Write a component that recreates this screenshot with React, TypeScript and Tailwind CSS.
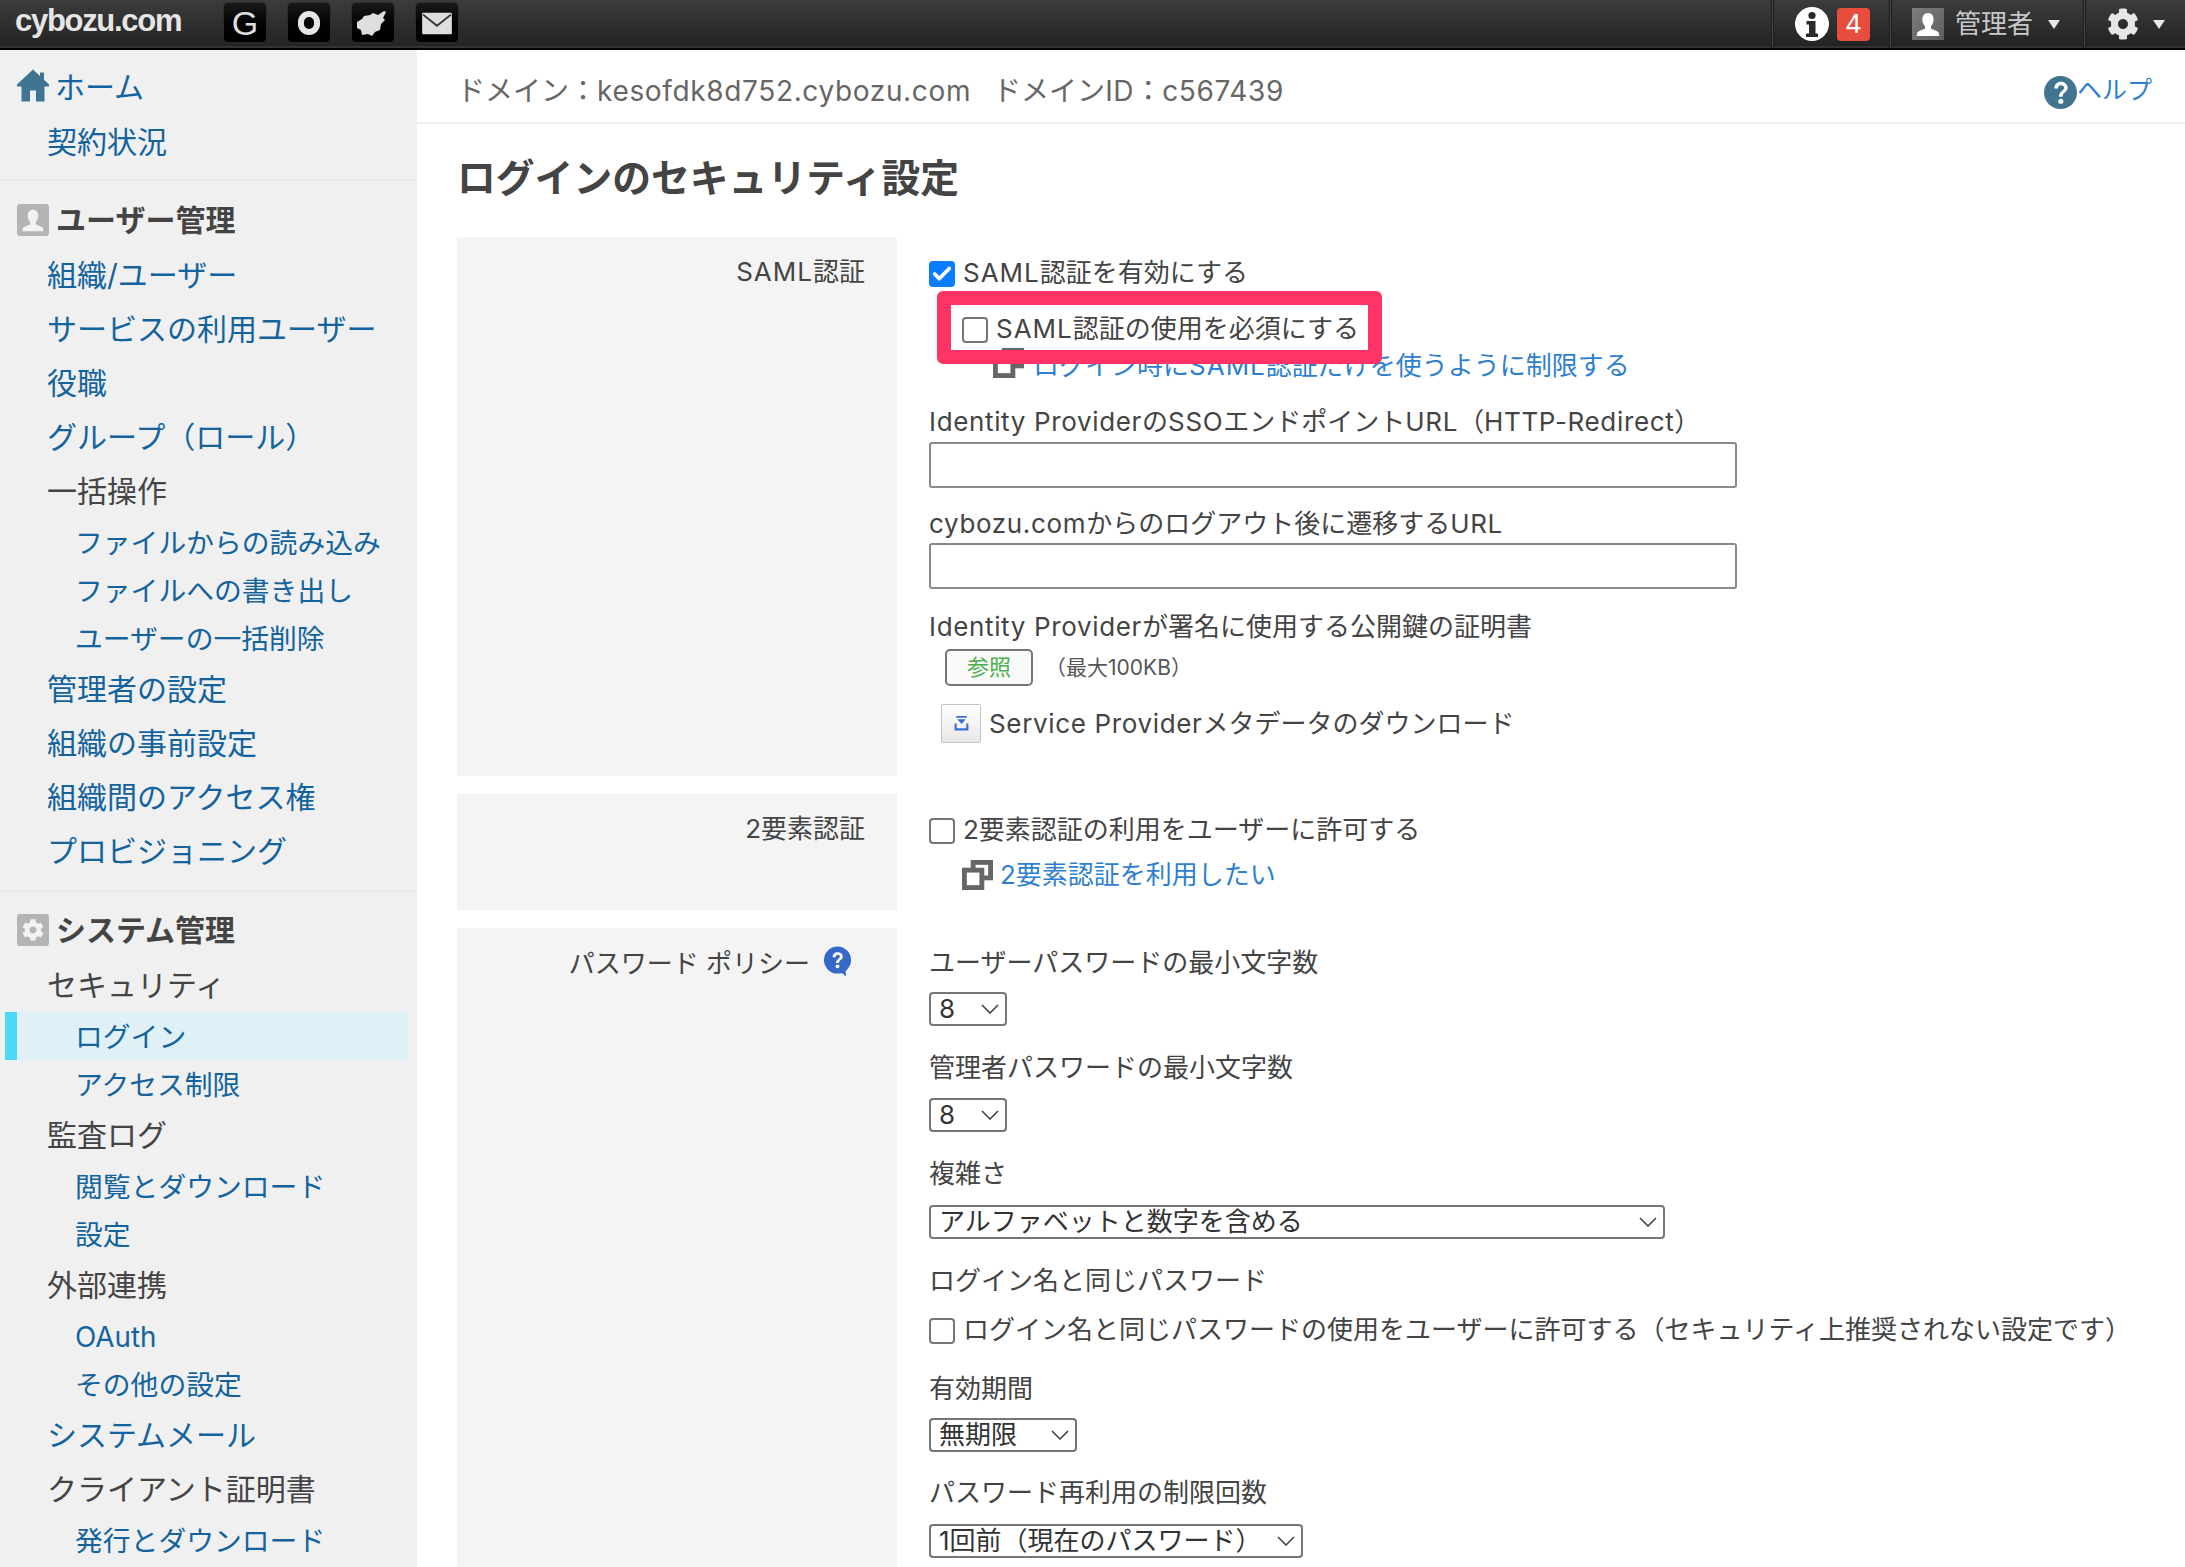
import { Check } from 'lucide-react';
import { FaCog } from 'react-icons/fa';
import type { ReactNode } from 'react';

function UserGlyph({ className }: { className?: string }) {
  return (
    <svg viewBox="0 0 32 32" className={className}>
      <path
        d="M16 5c-3.6 0-5.6 2.8-5.6 6.4 0 2.6 1 5 2.6 6.6v2.4c-1.6 1.2-6.4 2.2-7.6 4.2-.5.8-.6 2.4-.6 3.4h22.4c0-1-.1-2.6-.6-3.4-1.2-2-6-3-7.6-4.2V18c1.6-1.6 2.6-4 2.6-6.6C21.6 7.8 19.6 5 16 5z"
        fill="currentColor"
      />
    </svg>
  );
}

// latin runs sit a little wider in the original font
function L({ children }: { children: ReactNode }) {
  return <span className="tracking-[0.65px]">{children}</span>;
}

function Saml() {
  return <span className="tracking-[1px]">SAML</span>;
}

function TopIcon({ children }: { children: ReactNode }) {
  return (
    <div className="flex h-[41px] w-[44px] items-center justify-center rounded-[5px] border border-[#2c2c2c] bg-gradient-to-b from-[#1a1a1a] to-black text-[#dedede]">
      {children}
    </div>
  );
}

function Sep() {
  return <div className="h-[48px] w-[3px] border-x border-[#1c1c1c] bg-[#4a4a4a]" />;
}

function Caret() {
  return <div className="h-0 w-0 border-x-[6px] border-t-[9px] border-x-transparent border-t-[#e8e8e8]" />;
}

function TopBar() {
  return (
    <header className="flex h-[50px] items-start border-b-2 border-black bg-gradient-to-b from-[#3c3c3c] to-[#222222] shadow-[inset_0_-2px_0_#333333]">
      <div className="ml-[15px] w-[208px] pt-[2px] text-[31px] leading-[38px] font-bold tracking-[-1.3px] text-[#e6e6e6] [font-family:'Liberation_Sans',sans-serif]">
        cybozu.com
      </div>
      <div className="mt-[2px] flex gap-[20px]">
        <TopIcon>
          <span className="text-[34px] leading-none [font-family:'Liberation_Sans',sans-serif]">G</span>
        </TopIcon>
        <TopIcon>
          <div className="h-[24px] w-[22px] rounded-full border-[6px] border-[#e6e6e6]" />
        </TopIcon>
        <TopIcon>
          <svg viewBox="0 0 34 28" className="h-[28px] w-[34px]">
            <path
              d="M1 13l5-3 2-3 6-1 3-2 5 2 6-4 2 1-3 6 2 2-4 4-1 6-5 2-3 4-4-2-6 1-1-5-4-2z"
              fill="#dedede"
            />
          </svg>
        </TopIcon>
        <TopIcon>
          <svg viewBox="0 0 34 28" className="h-[26px] w-[34px]">
            <rect x="1" y="3" width="32" height="23" rx="1" fill="#dedede" />
            <path d="M2 5l15 12L32 5" fill="none" stroke="#333333" strokeWidth="2" />
          </svg>
        </TopIcon>
      </div>
      <div className="ml-auto flex h-[48px] items-center">
        <Sep />
        <div className="flex w-[115px] items-center gap-[8px] pl-[21px]">
          <svg viewBox="0 0 34 34" className="h-[34px] w-[34px]">
            <circle cx="17" cy="17" r="17" fill="#ffffff" />
            <circle cx="17" cy="8.5" r="3.6" fill="#2a2a2a" />
            <path d="M11.5 14h9v12.5h2.5V30H11v-3.5h3V17.5h-2.500z" fill="#2a2a2a" />
          </svg>
          <div className="flex h-[33px] w-[33px] items-center justify-center rounded-[4px] bg-[#e84c3d] text-[26px] leading-none text-white">
            4
          </div>
        </div>
        <Sep />
        <div className="flex w-[191px] items-center pl-[20px]">
          <div className="h-[32px] w-[32px] overflow-hidden bg-gradient-to-br from-[#7d7d7d] to-[#5e5e5e] text-white">
            <UserGlyph className="h-[32px] w-[32px]" />
          </div>
          <span className="ml-[11px] text-[26px] leading-none text-[#c9c9c9]">管理者</span>
          <div className="ml-[15px]">
            <Caret />
          </div>
        </div>
        <Sep />
        <div className="flex items-center pr-[20px] pl-[21px] text-[#e6e6e6]">
          <FaCog className="h-[32px] w-[32px]" />
          <div className="ml-[14px]">
            <Caret />
          </div>
        </div>
      </div>
    </header>
  );
}

function Nav1({ children, dark }: { children: ReactNode; dark?: boolean }) {
  return (
    <div className={`flex h-[54px] items-center pl-[47px] text-[30px] ${dark ? 'text-[#444444]' : 'text-[#13639f]'}`}>
      {children}
    </div>
  );
}

function Nav2({ children, active }: { children: ReactNode; active?: boolean }) {
  if (active) {
    return (
      <div className="ml-[5px] flex h-[48px] w-[402px] items-center border-l-[12px] border-[#4bd9f7] bg-[#dff1f6] pt-[4px] pl-[58px] text-[27.8px] text-[#13639f]">
        {children}
      </div>
    );
  }
  return <div className="flex h-[48px] items-center pt-[4px] pl-[75px] text-[27.8px] text-[#13639f]">{children}</div>;
}

function NavHead({ icon, children }: { icon: ReactNode; children: ReactNode }) {
  return (
    <div className="flex h-[56px] items-center gap-[7px] pl-[17px] text-[30px] font-bold text-[#444444]">
      <div className="flex h-[32px] w-[32px] items-center justify-center overflow-hidden rounded-[3px] bg-[#b4b4b4] text-[#f2f2f2]">
        {icon}
      </div>
      {children}
    </div>
  );
}

function Sidebar() {
  return (
    <aside className="h-full w-[417px] shrink-0 bg-[#f0f0f0]">
      <div className="border-b-2 border-[#ebebeb] pt-[9px] pb-[10px]">
        <div className="flex h-[56px] items-center gap-[6px] pl-[17px] text-[30px] text-[#13639f]">
          <svg viewBox="0 0 32 32" className="-mt-[3px] h-[33px] w-[32px]">
            <path
              d="M16 0l7 6.500V3h4v7.200L32 15v2h-4.500v15H19V21h-6v11H4.500V17H0v-2z"
              fill="#3f7591"
            />
          </svg>
          ホーム
        </div>
        <Nav1>契約状況</Nav1>
      </div>
      <div className="border-b-2 border-[#ebebeb] pt-[11px] pb-[12px]">
        <NavHead icon={<UserGlyph className="h-[30px] w-[30px]" />}>ユーザー管理</NavHead>
        <Nav1>組織/ユーザー</Nav1>
        <Nav1>サービスの利用ユーザー</Nav1>
        <Nav1>役職</Nav1>
        <Nav1>グループ（ロール）</Nav1>
        <Nav1 dark>一括操作</Nav1>
        <Nav2>ファイルからの読み込み</Nav2>
        <Nav2>ファイルへの書き出し</Nav2>
        <Nav2>ユーザーの一括削除</Nav2>
        <Nav1>管理者の設定</Nav1>
        <Nav1>組織の事前設定</Nav1>
        <Nav1>組織間のアクセス権</Nav1>
        <Nav1>プロビジョニング</Nav1>
      </div>
      <div className="pt-[10px]">
        <NavHead icon={<FaCog className="h-[22px] w-[22px]" />}>システム管理</NavHead>
        <Nav1 dark>セキュリティ</Nav1>
        <Nav2 active>ログイン</Nav2>
        <Nav2>アクセス制限</Nav2>
        <Nav1 dark>監査ログ</Nav1>
        <Nav2>閲覧とダウンロード</Nav2>
        <Nav2>設定</Nav2>
        <Nav1 dark>外部連携</Nav1>
        <Nav2>OAuth</Nav2>
        <Nav2>その他の設定</Nav2>
        <Nav1>システムメール</Nav1>
        <Nav1 dark>クライアント証明書</Nav1>
        <Nav2>発行とダウンロード</Nav2>
      </div>
    </aside>
  );
}

function Box({ checked }: { checked?: boolean }) {
  if (checked) {
    return (
      <div className="mt-[3px] flex h-[26px] w-[26px] shrink-0 items-center justify-center rounded-[4px] bg-[#0a7cff] text-white">
        <Check className="h-[22px] w-[22px]" strokeWidth={4} />
      </div>
    );
  }
  return <div className="mt-[3px] h-[26px] w-[26px] shrink-0 rounded-[4px] border-2 border-[#767676] bg-white" />;
}

function CheckRow({ checked, className, children }: { checked?: boolean; className?: string; children: ReactNode }) {
  return (
    <div className={`flex h-[36px] items-center gap-[8px] ${className ?? ''}`}>
      <Box checked={checked} />
      <span>{children}</span>
    </div>
  );
}

function Label({ className, children }: { className?: string; children: ReactNode }) {
  return (
    <div className={`flex h-[36px] items-center ${className ?? ''}`}>
      <span>{children}</span>
    </div>
  );
}

function TextBox({ className }: { className?: string }) {
  return <div className={`h-[46px] w-[808px] rounded-[3px] border-2 border-[#8a8a8a] bg-white ${className ?? ''}`} />;
}

function SelectBox({ width, className, children }: { width: string; className?: string; children: ReactNode }) {
  return (
    <div
      className={`flex h-[34px] items-center justify-between rounded-[4px] border-2 border-[#767676] bg-white pr-[6px] pl-[8px] text-[26px] leading-none text-[#333333] ${width} ${className ?? ''}`}
    >
      <span>{children}</span>
      <svg viewBox="0 0 18 10" className="h-[10px] w-[18px]">
        <path d="M1 1l8 8 8-8" fill="none" stroke="#444444" strokeWidth="1.600" />
      </svg>
    </div>
  );
}

function WindowIcon({ className }: { className?: string }) {
  return (
    <svg viewBox="0 0 32 32" className={`h-[31px] w-[31px] shrink-0 ${className ?? ''}`}>
      <rect x="9" y="1" width="23" height="21" fill="#666666" />
      <rect x="14" y="6" width="13" height="11" fill="#ffffff" />
      <rect x="0" y="9" width="23" height="23" fill="#666666" />
      <rect x="5" y="14" width="13" height="13" fill="#ffffff" />
    </svg>
  );
}

function Section({ label, icon, className, children }: { label?: ReactNode; icon?: ReactNode; className?: string; children: ReactNode }) {
  return (
    <div className={`grid grid-cols-[440px_1fr] gap-x-[32px] ${className ?? ''}`}>
      <div className="bg-[#f4f4f4]">{icon ?? <div className="pt-[17px] pr-[32px] text-right leading-[36px]">{label}</div>}</div>
      <div>{children}</div>
    </div>
  );
}

function Content() {
  return (
    <main className="min-w-0 flex-1 bg-white">
      <div className="flex h-[74px] justify-between border-b-2 border-[#f0f0f0] pr-[33px] pl-[40px] text-[#666666]">
        <div className="mt-[23px] flex gap-[22px] text-[28px] leading-[36px]">
          <span>ドメイン：<L>kesofdk8d752.cybozu.com</L></span>
          <span>ドメイン<L>ID</L>：<L>c567439</L></span>
        </div>
        <div className="flex items-start text-[25px] text-[#2f7fd0]">
          <svg viewBox="0 0 32 32" className="mt-[26px] h-[33px] w-[33px]">
            <circle cx="16" cy="16" r="16" fill="#40748f" />
            <path d="M10 12c0-4 3-6.500 6.500-6.500S23 8 23 11.500c0 4-5 4.500-5 8.500h-3.500c0-5 5-5.500 5-8.500 0-1.500-1.300-2.500-3-2.500s-3 1.200-3 3z" fill="#ffffff" />
            <circle cx="16.300" cy="24.500" r="2.500" fill="#ffffff" />
          </svg>
          <span className="mt-[22px] leading-[36px]">ヘルプ</span>
        </div>
      </div>

      <div className="pl-[40px] text-[26px] text-[#444444]">
        <h1 className="flex h-[113px] items-center pb-[4px] text-[38.8px] font-bold text-[#444444]">ログインのセキュリティ設定</h1>

        <Section label={<><Saml />認証</>} className="h-[539px]">
          <CheckRow checked className="mt-[17px]"><Saml />認証を有効にする</CheckRow>
          <div className="relative mt-[20px] ml-[33px]">
            <CheckRow><Saml />認証の使用を必須にする</CheckRow>
          </div>
          <div className="mt-[1px] flex h-[36px] items-center gap-[9px] pl-[64px] text-[#2f7fd0]">
            <WindowIcon className="-mt-[6px]" />
            <span>ログイン時に<Saml />認証だけを使うように制限する</span>
          </div>
          <Label className="mt-[20px]"><L>Identity Provider</L>の<L>SSO</L>エンドポイント<L>URL</L>（<L>HTTP-Redirect</L>）</Label>
          <TextBox className="mt-[3px]" />
          <Label className="mt-[17px]"><L>cybozu.com</L>からのログアウト後に遷移する<L>URL</L></Label>
          <TextBox className="mt-[2px]" />
          <Label className="mt-[19px]"><L>Identity Provider</L>が署名に使用する公開鍵の証明書</Label>
          <div className="mt-[5px] flex h-[37px] items-center pl-[16px]">
            <div className="flex h-[37px] w-[88px] items-center justify-center rounded-[5px] border-2 border-[#767676] bg-[#fafafa] text-[22px] text-[#4caf50]">
              参照
            </div>
            <span className="ml-[12px] text-[21px] text-[#555555]">（最大100KB）</span>
          </div>
          <div className="mt-[18px] flex h-[39px] items-center gap-[8px] pl-[12px]">
            <div className="flex h-[39px] w-[40px] items-center justify-center rounded-[2px] border border-[#c4c4c4] bg-gradient-to-b from-white to-[#e8e8e8]">
              <svg viewBox="0 0 16 16" className="h-[17px] w-[17px]">
                <path d="M3 1h10v1.500H3zM4 4h8l-4 4.500z" fill="#3a6fd0" />
                <path d="M1.500 8v6.500h13V8h-2v4.500h-9V8z" fill="#3a6fd0" />
              </svg>
            </div>
            <span><L>Service Provider</L>メタデータのダウンロード</span>
          </div>
        </Section>

        <Section label="2要素認証" className="mt-[18px] h-[116px]">
          <CheckRow className="mt-[17px]">2要素認証の利用をユーザーに許可する</CheckRow>
          <div className="mt-[9px] flex h-[36px] items-center gap-[7px] pl-[33px] text-[#2f7fd0]">
            <WindowIcon />
            <span>2要素認証を利用したい</span>
          </div>
        </Section>

        <Section
          className="mt-[18px] h-[700px]"
          icon={
            <div className="flex items-start justify-end gap-[13px] pt-[18px] pr-[45px]">
              <span className="leading-[36px]">パスワード ポリシー</span>
              <svg viewBox="0 0 30 32" className="h-[32px] w-[29px]">
                <circle cx="15" cy="14" r="14" fill="#3568c8" />
                <path d="M18 26l6 5-1-8z" fill="#3568c8" />
                <path d="M10 11c0-3 2.300-5 5.300-5s5.200 1.700 5.200 4.300c0 3.200-4 3.700-4 6.700h-3c0-4 4-4.300 4-6.700 0-1-.9-1.800-2.200-1.800s-2.300.9-2.300 2.500z" fill="#ffffff" />
                <circle cx="15" cy="20.500" r="2" fill="#ffffff" />
              </svg>
            </div>
          }
        >
          <Label className="mt-[16px]">ユーザーパスワードの最小文字数</Label>
          <SelectBox width="w-[78px]" className="mt-[12px]">8</SelectBox>
          <Label className="mt-[23px]">管理者パスワードの最小文字数</Label>
          <SelectBox width="w-[78px]" className="mt-[13px]">8</SelectBox>
          <Label className="mt-[23px]">複雑さ</Label>
          <SelectBox width="w-[736px]" className="mt-[14px]">アルファベットと数字を含める</SelectBox>
          <Label className="mt-[23px]">ログイン名と同じパスワード</Label>
          <CheckRow className="mt-[13px]">ログイン名と同じパスワードの使用をユーザーに許可する（セキュリティ上推奨されない設定です）</CheckRow>
          <Label className="mt-[23px]">有効期間</Label>
          <SelectBox width="w-[148px]" className="mt-[12px]">無期限</SelectBox>
          <Label className="mt-[22px]">パスワード再利用の制限回数</Label>
          <SelectBox width="w-[374px]" className="mt-[14px]">1回前（現在のパスワード）</SelectBox>
        </Section>
      </div>
    </main>
  );
}

export default function App() {
  return (
    <div className="relative flex h-[1567px] w-[2185px] flex-col overflow-hidden bg-white [font-family:'Inter','Noto_Sans_CJK_JP',sans-serif]">
      <TopBar />
      <div className="flex min-h-0 flex-1">
        <Sidebar />
        <Content />
      </div>
      {/* annotation from the original screenshot, drawn over the form */}
      <div className="pointer-events-none absolute top-[291px] left-[937px] h-[73px] w-[445px] rounded-[6px] border-[14px] border-[#ff3366]" />
    </div>
  );
}
